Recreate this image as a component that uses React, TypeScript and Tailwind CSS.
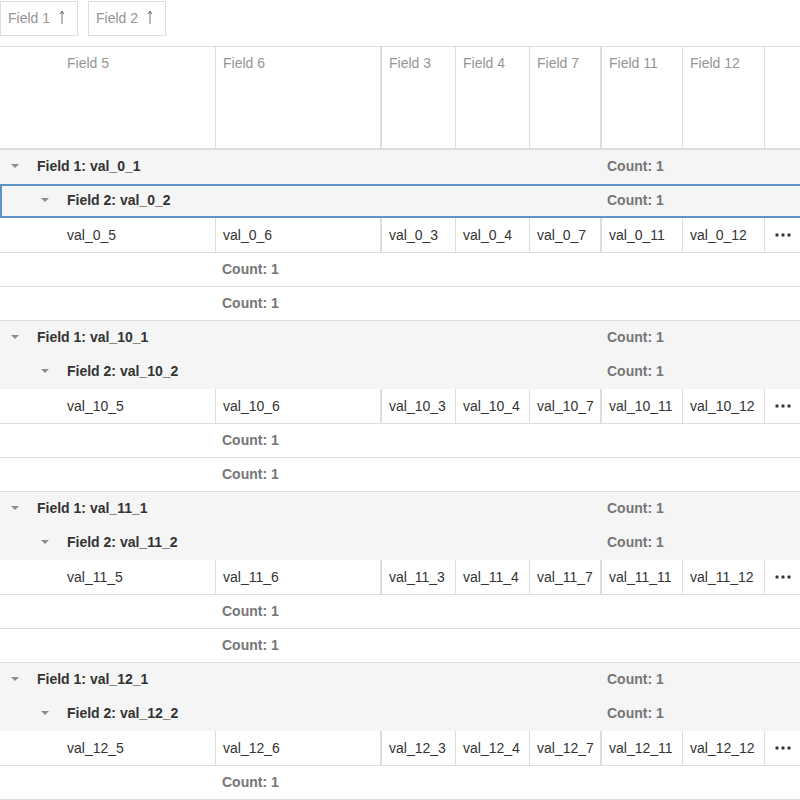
import React from 'react'

const cols = [
  { key: '5', title: 'Field 5', w: 'w-[156px]', border: 'border-r border-[#ddd]' },
  { key: '6', title: 'Field 6', w: 'w-[166px]', border: 'border-r-2 border-[#ddd]' },
  { key: '3', title: 'Field 3', w: 'w-[74px]', border: 'border-r border-[#ddd]' },
  { key: '4', title: 'Field 4', w: 'w-[74px]', border: 'border-r border-[#ddd]' },
  { key: '7', title: 'Field 7', w: 'w-[72px]', border: 'border-r-2 border-[#ddd]' },
  { key: '11', title: 'Field 11', w: 'w-[81px]', border: 'border-r border-[#ddd]' },
  { key: '12', title: 'Field 12', w: 'w-[82px]', border: 'border-r border-[#ddd]' },
]

const groups = [0, 10, 11, 12]

function Caret() {
  return <div className="w-0 h-0 border-l-[4px] border-r-[4px] border-t-[4px] border-l-transparent border-r-transparent border-t-[#8c8c8c] -mt-[2px]" />
}

function SortArrow() {
  return (
    <svg width="8" height="14" viewBox="0 0 8 14" className="shrink-0 -mt-[3px]">
      <path d="M4 1V14M2 4L4 1L6 4" stroke="#707070" strokeWidth="1" fill="none" />
    </svg>
  )
}

function Chip({ label }: { label: string }) {
  return (
    <div className="h-[35px] border border-[#ddd] flex items-center pl-[7px] pr-[11px] gap-[8px] text-[#959595]">
      <span>{label}</span>
      <SortArrow />
    </div>
  )
}

function MoreDots() {
  return (
    <svg width="16" height="4" viewBox="0 0 16 4">
      <rect x="0.5" y="0.5" width="3" height="3" rx="0.6" fill="#333" />
      <rect x="6.5" y="0.5" width="3" height="3" rx="0.6" fill="#333" />
      <rect x="12.5" y="0.5" width="3" height="3" rx="0.6" fill="#333" />
    </svg>
  )
}

function GroupRow({ level, label, focused }: { level: 1 | 2; label: string; focused?: boolean }) {
  return (
    <div className={`relative flex h-[34px] bg-[#f5f5f5] items-center font-bold ${focused ? 'shadow-[inset_0_0_0_2px_#5f95c5]' : ''}`}>
      {level === 2 && <div className="w-[30px] shrink-0" />}
      <div className="w-[30px] shrink-0 flex justify-center"><Caret /></div>
      <div className={`${level === 1 ? 'w-[572px]' : 'w-[542px]'} shrink-0 pl-[7px] text-[#333] -mt-[1px]`}>{label}</div>
      <div className="pl-[5px] text-[#767676] -mt-[1px]">Count: 1</div>
    </div>
  )
}

function DataRow({ n }: { n: number }) {
  return (
    <div className="flex h-[35px] border-b border-[#ddd] bg-white text-[#333]">
      <div className="w-[60px] shrink-0" />
      {cols.map((c) => (
        <div key={c.key} className={`${c.w} ${c.border} shrink-0 flex items-center pl-[7px] whitespace-nowrap overflow-hidden`}>
          val_{n}_{c.key}
        </div>
      ))}
      <div className="w-[60px] shrink-0 flex items-center pl-[10px]"><MoreDots /></div>
    </div>
  )
}

function FooterRow() {
  return (
    <div className="flex h-[34px] border-b border-[#ddd] bg-white items-center">
      <div className="w-[216px] shrink-0" />
      <div className="pl-[6px] font-bold text-[#767676]">Count: 1</div>
    </div>
  )
}

export default function App() {
  return (
    <div className="w-[800px] h-[800px] overflow-hidden bg-white text-[14px] font-['Liberation_Sans',Arial,sans-serif]">
      <div className="flex gap-[10px] pt-[1px]">
        <Chip label="Field 1" />
        <Chip label="Field 2" />
      </div>
      <div className="w-[825px] mt-[10px]">
        <div className="flex h-[104px] border-t border-b-2 border-[#ddd] text-[#959595]">
          <div className="w-[60px] shrink-0" />
          {cols.map((c) => (
            <div key={c.key} className={`${c.w} ${c.border} shrink-0 pl-[7px] pt-[6px]`}>{c.title}</div>
          ))}
          <div className="w-[60px] shrink-0" />
        </div>
        {groups.map((g, i) => (
          <div key={g}>
            <GroupRow level={1} label={`Field 1: val_${g}_1`} />
            <GroupRow level={2} label={`Field 2: val_${g}_2`} focused={i === 0} />
            <DataRow n={g} />
            <FooterRow />
            <FooterRow />
          </div>
        ))}
      </div>
    </div>
  )
}
